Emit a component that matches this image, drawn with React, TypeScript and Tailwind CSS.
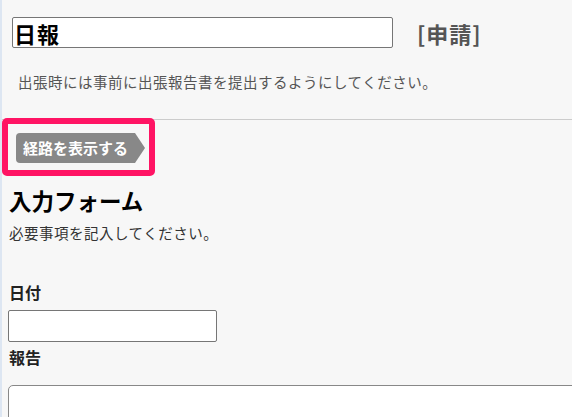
export default function App() {
  return (
    <div className="h-[417px] w-[572px] overflow-hidden border-l-2 border-[#dde6f2] bg-[#f7f7f7] font-['Noto_Sans_CJK_JP','Noto_Sans',sans-serif] text-[#222]">
      <header className="pl-[10px] pt-[17px]">
        <div className="flex items-center">
          <input
            defaultValue="日報"
            className="h-[31px] w-[381px] rounded-[2px] border border-[#767676] bg-white px-[1px] text-[22px] font-bold leading-none tracking-[1px] text-black outline-none"
          />
          <span className="ml-[24px] text-[22px] font-bold leading-[30px] tracking-[1px] text-[#555]">[申請]</span>
        </div>
        <p className="mt-[24px] pl-[6px] text-[14.5px] leading-[20px] tracking-[0.5px] text-[#555]">
          出張時には事前に出張報告書を提出するようにしてください。
        </p>
      </header>

      <hr className="mt-[27px] border-t border-[#cccccc]" />

      <div className="-mt-[2px] h-[58px] w-[153px] rounded-[5px] border-[6px] border-[#ff1464] pl-[8px] pt-[9px]">
        <button className="flex h-[30px] w-[129px] items-center rounded-l-[4px] bg-[#888888] pl-[7px] text-[15px] font-bold text-white [clip-path:polygon(0_0,calc(100%-10px)_0,100%_50%,calc(100%-10px)_100%,0_100%)]">
          経路を表示する
        </button>
      </div>

      <main className="pl-[6px]">
        <h1 className="mt-[9px] pl-[1px] text-[22.5px] font-bold leading-[30px] text-black">入力フォーム</h1>
        <p className="mt-[8px] pl-[1px] text-[14.5px] leading-[20px] tracking-[0.5px] text-[#333]">必要事項を記入してください。</p>

        <label className="mt-[38px] block pl-[1px] text-[16px] font-bold leading-[22px]">日付</label>
        <input className="mt-[7px] h-[32px] w-[209px] rounded-[2px] border border-[#767676] bg-white outline-none" />

        <label className="mt-[4px] block pl-[1px] text-[16px] font-bold leading-[22px]">報告</label>
        <textarea className="mt-[17px] h-[80px] w-[600px] resize-none rounded-[5px] border border-[#888] bg-white outline-none" />
      </main>
    </div>
  );
}
